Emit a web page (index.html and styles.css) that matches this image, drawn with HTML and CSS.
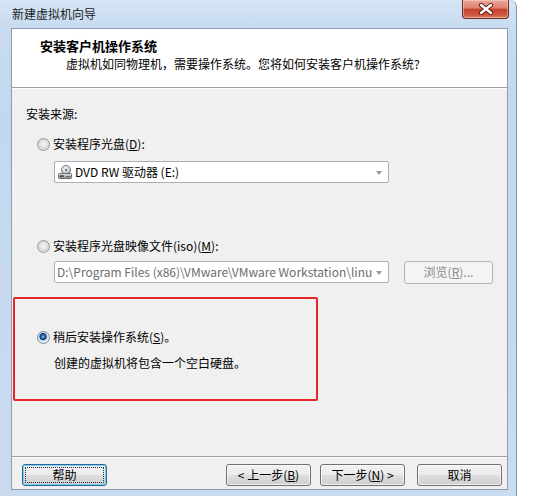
FILE: index.html
```html
<!DOCTYPE html>
<html lang="zh-CN">
<head>
<meta charset="utf-8">
<title>新建虚拟机向导</title>
<link rel="stylesheet" href="styles.css">
</head>
<body>
<div class="window">
  <div class="titlebar">
    <span class="title">新建虚拟机向导</span>
    <div class="close">
      <svg width="16" height="12" viewBox="0 0 16 12">
        <path d="M3 2 L13 10 M13 2 L3 10" stroke="#5a1a12" stroke-width="4.2" stroke-linecap="round"/>
        <path d="M3 2 L13 10 M13 2 L3 10" stroke="#ffffff" stroke-width="2.4" stroke-linecap="round"/>
      </svg>
    </div>
  </div>
  <div class="client">
    <div class="header">
      <div class="h-title">安装客户机操作系统</div>
      <div class="h-sub">虚拟机如同物理机，需要操作系统。您将如何安装客户机操作系统?</div>
    </div>
    <div class="body">
      <div class="label">安装来源:</div>
      <div class="radio-row r1"><span class="radio"></span><span>安装程序光盘(<u>D</u>):</span></div>
      <div class="combo c1">
        <svg class="dvd" width="16" height="16" viewBox="0 0 16 16">
          <defs>
            <linearGradient id="dg" x1="0" y1="0" x2="0" y2="1">
              <stop offset="0" stop-color="#e6e6e6"/>
              <stop offset="1" stop-color="#8c8c8c"/>
            </linearGradient>
            <radialGradient id="disc" cx="0.45" cy="0.4" r="0.6">
              <stop offset="0" stop-color="#ffffff"/>
              <stop offset="0.6" stop-color="#c9d3dc"/>
              <stop offset="1" stop-color="#8d99a6"/>
            </radialGradient>
          </defs>
          <circle cx="9" cy="6" r="4.6" fill="url(#disc)" stroke="#5f6b78" stroke-width="0.8"/>
          <circle cx="9" cy="6" r="1.2" fill="#6e7a86"/>
          <rect x="1.5" y="9.5" width="13" height="5" rx="0.8" fill="url(#dg)" stroke="#555" stroke-width="0.8"/>
          <rect x="2.8" y="11.3" width="4" height="1.6" fill="#3a3a3a"/>
          <rect x="9" y="12" width="4.2" height="0.8" fill="#4b4b4b"/>
        </svg>
        <span class="ctext">DVD RW 驱动器 (E:)</span>
        <span class="arrow"></span>
      </div>
      <div class="radio-row r2"><span class="radio"></span><span>安装程序光盘映像文件(iso)(<u>M</u>):</span></div>
      <div class="iso-row">
        <div class="combo c2">
          <span class="ctext grey">D:\Program Files (x86)\VMware\VMware Workstation\linu</span>
          <span class="arrow"></span>
        </div>
        <div class="btn disabled">浏览(<u>R</u>)...</div>
      </div>
      <div class="radio-row r3"><span class="radio checked"></span><span>稍后安装操作系统(<u>S</u>)。</span></div>
      <div class="note">创建的虚拟机将包含一个空白硬盘。</div>
    </div>
    <div class="footer">
      <div class="btn focused"><span class="focus-ring"></span>帮助</div>
      <div class="btn prev">&lt; 上一步(<u>B</u>)</div>
      <div class="btn next">下一步(<u>N</u>) &gt;</div>
      <div class="btn cancel">取消</div>
    </div>
    <div class="annot"></div>
  </div>
</div>
</body>
</html>
```
FILE: styles.css
```css
html, body {
  margin: 0;
  padding: 0;
  background: #ffffff;
}

body {
  font-family: "Noto Sans CJK SC", "Noto Sans", sans-serif;
  font-size: 12px;
  color: #000000;
}

u {
  text-decoration: underline;
  text-underline-offset: 1px;
}

.window {
  width: 517px;
  height: 496px;
  box-sizing: border-box;
  padding: 0 8px 6px 11px;
  display: flex;
  flex-direction: column;
  background: linear-gradient(to bottom, #d6e5f5 0px, #cfe0f3 14px, #c8dbf0 28px, #c3d7ee 120px, #c9dbef 496px);
  border-right: 1px solid #7f97b4;
  border-top-right-radius: 7px;
}

.titlebar {
  height: 28px;
  flex: none;
  display: flex;
  justify-content: space-between;
  align-items: flex-start;
}

.title {
  padding: 6px 0 0 1px;
  line-height: 16px;
  color: #1b1b1b;
}

.close {
  width: 47px;
  height: 19px;
  box-sizing: border-box;
  margin-right: -1px;
  border: 1px solid #6b2d26;
  border-top: none;
  border-radius: 0 0 4px 4px;
  background: linear-gradient(to bottom, #eaa99b 0%, #de7f6d 45%, #c6412c 52%, #cf5a40 85%, #e08a6c 100%);
  box-shadow: inset 0 0 0 1px rgba(255, 220, 210, 0.45);
  display: flex;
  align-items: center;
  justify-content: center;
}

.client {
  flex: 1;
  position: relative;
  display: flex;
  flex-direction: column;
  border: 1px solid #8d9cb1;
  background: #f0f0f0;
}

.header {
  flex: none;
  background: #ffffff;
  padding: 8px 0 15px 28px;
  border-bottom: 1px solid #a0a0a0;
  box-shadow: 0 1px 0 #ffffff;
}

.h-title {
  font-weight: bold;
  font-size: 13px;
  line-height: 18px;
}

.h-sub {
  margin-top: 1px;
  padding-left: 26px;
  line-height: 16px;
}

.body {
  flex: 1;
  padding: 18px 0 0 14px;
}

.label {
  line-height: 16px;
}

.radio-row {
  display: flex;
  align-items: center;
  gap: 3px;
  padding-left: 11px;
  line-height: 16px;
  height: 16px;
}

.r1 { margin-top: 14px; }
.r2 { margin-top: 55px; }
.r3 { margin-top: 45px; }

.radio {
  width: 13px;
  height: 13px;
  box-sizing: border-box;
  border-radius: 50%;
  border: 1px solid #989898;
  background: radial-gradient(circle at 50% 45%, #f6f6f6 0, #e6e6e6 3px, #d3d3d3 5px, #ececec 6px);
  flex: none;
}

.radio.checked {
  border-color: #7c8a99;
  background: radial-gradient(circle at 46% 42%, #9fd0f2 0, #2b6cae 1.6px, #133d6d 3.2px, #c4d7ea 4px, #eef2f6 5.5px);
}

.combo {
  height: 22px;
  box-sizing: border-box;
  border: 1px solid #acb0b6;
  border-radius: 2px;
  background: #ffffff;
  display: flex;
  align-items: center;
  position: relative;
}

.c1 {
  width: 335px;
  margin: 9px 0 0 28px;
  padding-left: 2px;
}

.dvd {
  flex: none;
  margin-right: 2px;
}

.ctext {
  flex: 1;
  white-space: nowrap;
  line-height: 16px;
}

.grey {
  color: #6d6d6d;
  padding-left: 2px;
}

.arrow {
  flex: none;
  width: 0;
  height: 0;
  margin: 1px 6px 0 6px;
  border-left: 3.5px solid transparent;
  border-right: 3.5px solid transparent;
  border-top: 4px solid #9a9a9a;
}

.c2 .arrow {
  margin-left: 2px;
}

.iso-row {
  margin: 6px 0 0 28px;
  height: 24px;
  display: flex;
  align-items: center;
}

.c2 {
  width: 335px;
}

.btn {
  height: 22px;
  box-sizing: border-box;
  border: 1px solid #707070;
  border-radius: 3px;
  background: linear-gradient(to bottom, #f2f2f2 0%, #ebebeb 48%, #dddddd 52%, #cfcfcf 100%);
  box-shadow: inset 0 0 0 1px rgba(255, 255, 255, 0.7);
  display: flex;
  align-items: center;
  justify-content: center;
  line-height: 16px;
  width: 85px;
  position: relative;
  flex: none;
}

.btn.disabled {
  width: 89px;
  height: 23px;
  margin-left: 15px;
  border-color: #b1b5b9;
  background: #f4f4f4;
  box-shadow: none;
  color: #8a8a8a;
}

.note {
  margin-top: 10px;
  padding-left: 28px;
  line-height: 16px;
}

.footer {
  flex: none;
  border-top: 1px solid #a0a0a0;
  box-shadow: inset 0 1px 0 #ffffff;
  padding: 7px 5px 3px 10px;
  display: flex;
}

.btn.focused {
  border-color: #2f6592;
  box-shadow: inset 0 0 0 1px #6fd2f7;
}

.focus-ring {
  position: absolute;
  inset: 2px;
  border: 1px dotted #2c2c2c;
  border-radius: 1px;
}

.prev { margin-left: auto; }
.next { margin-left: 9px; }
.cancel { margin-left: 12px; width: 85px; }

.annot {
  position: absolute;
  left: 1px;
  top: 268px;
  width: 305px;
  height: 104px;
  box-sizing: border-box;
  border: 2px solid #e4252a;
  border-radius: 2px;
}
```
